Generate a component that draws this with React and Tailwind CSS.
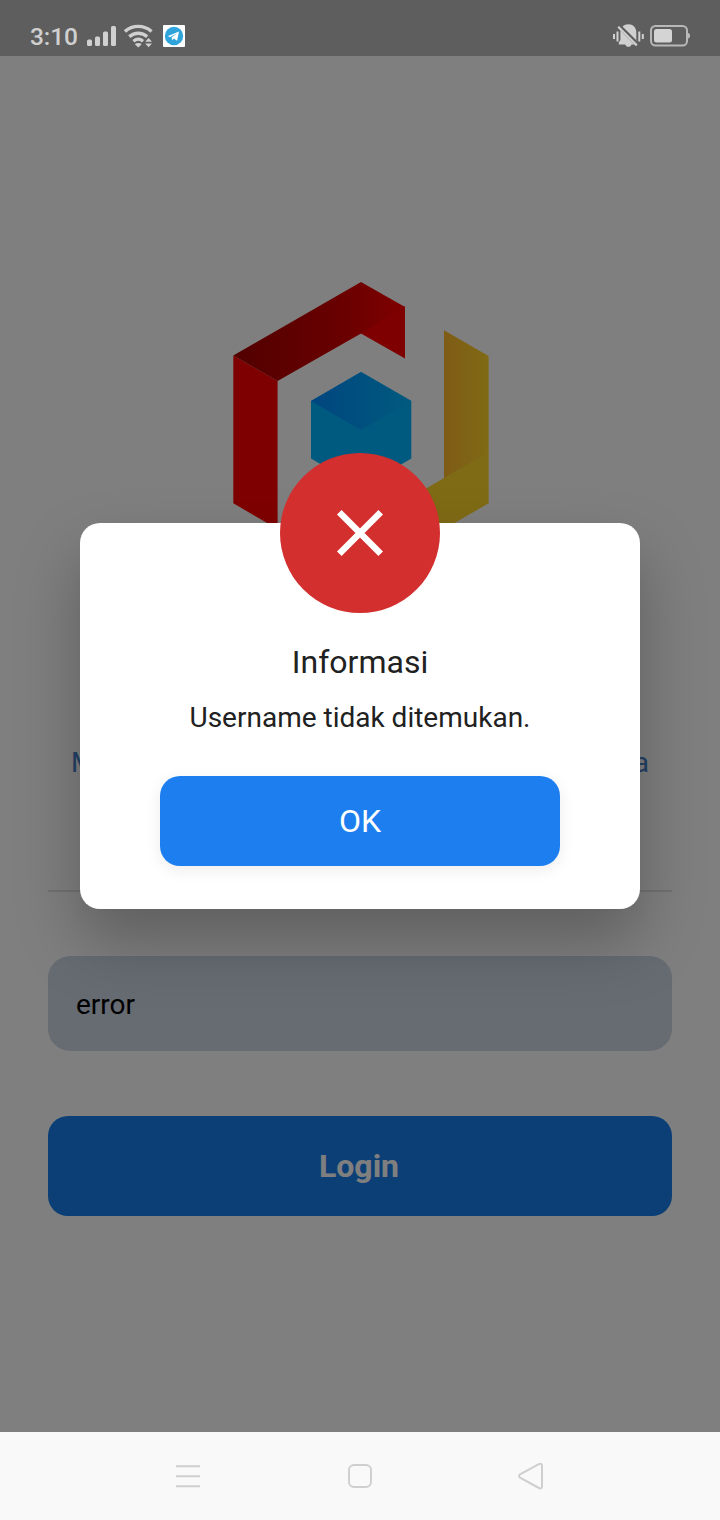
function Logo() {
  return (
    <svg viewBox="233 282 256 296" className="h-[296px] w-[256px] blur-[0.5px]" aria-hidden="true">
      <defs>
        <linearGradient id="redFold" x1="0" x2="1">
          <stop offset="0" stopColor="#a40000" />
          <stop offset="0.6" stopColor="#d00000" />
          <stop offset="1" stopColor="#ff0000" />
        </linearGradient>
        <linearGradient id="blueTop" x1="0" x2="1">
          <stop offset="0" stopColor="#008cff" />
          <stop offset="1" stopColor="#00b4ff" />
        </linearGradient>
        <linearGradient id="amber" x1="0" x2="1">
          <stop offset="0" stopColor="#ffb72d" />
          <stop offset="1" stopColor="#ffd52a" />
        </linearGradient>
      </defs>
      <path d="M233.3 355.5 277.6 381V529L233.3 503.3Z" fill="#ff0000" />
      <path d="M360 333.5 404 306 405 307V358.5L361 333.5Z" fill="#ff0000" />
      <path d="M233.3 355.5 361 282 405 307 361 333.5 277.6 381Z" fill="url(#redFold)" />
      <path d="M361 372 411.3 401V458.5L361 488 311 458.5V401Z" fill="#00b4ff" />
      <path d="M361 372 411.3 401 361 430 311 401Z" fill="url(#blueTop)" />
      <path d="M444 330.3 488.6 356V453L444 478.5Z" fill="url(#amber)" />
      <path d="M488.6 452.5V503.3L361 577V526.5L444 478Z" fill="#ffd52a" />
    </svg>
  );
}

function StatusBar() {
  return (
    <header className="absolute inset-x-0 top-0 flex h-14 items-start justify-between bg-black/[0.26] pr-[30px] pl-[30px] text-[#d0d0d0]">
      <div className="flex items-start">
        <span className="mt-[21px] w-[57px] text-[24.5px] leading-8 font-medium tracking-[-0.1px]">3:10</span>
        <svg viewBox="0 0 29 20" className="mt-[26px] h-5 w-[29px]" fill="currentColor">
          <rect x="0" y="13.5" width="5" height="6.5" rx="1.5" />
          <rect x="8" y="10.5" width="5" height="9.5" rx="1.5" />
          <rect x="16" y="5.5" width="5" height="14.5" rx="1.5" />
          <rect x="24" y="0" width="5" height="20" rx="1.5" />
        </svg>
        <svg viewBox="0 0 30 24" className="mt-6 ml-2 h-6 w-[30px]" fill="none" stroke="currentColor">
          <path d="M1 7.5C8.5.7 20 .7 27.5 7.5" strokeWidth="3.4" />
          <path d="M5.3 12.6C10.5 8.1 18 8.1 23.2 12.6" strokeWidth="3.4" />
          <path d="M9.4 17.2C12.5 14.6 16 14.6 19.1 17.2" strokeWidth="3.2" />
          <path d="M10.8 20.2c2-1.7 4.9-1.7 6.9 0L14.3 23.4Z" fill="currentColor" stroke="none" />
          <path d="M21.2 17.8 24.6 14 28 17.8ZM21.2 19.4H28L24.6 23.2Z" fill="currentColor" stroke="none" />
        </svg>
        <svg viewBox="0 0 22 22" className="mt-[25px] ml-[9px] size-[22px]">
          <rect width="22" height="22" rx="1" fill="#fff" />
          <circle cx="11" cy="11" r="9.2" fill="#2fa4db" />
          <path d="M4.6 11.3 16 6.6 14.1 15.8 10.7 13.6 9 15.2 8.6 12.5 13.7 8.5 7.4 12.1Z" fill="#fff" />
        </svg>
      </div>
      <div className="flex items-start">
        <svg viewBox="0 0 31 24" className="mt-6 -mr-px h-6 w-[31px]" fill="currentColor">
          <path d="M15.4.3c-4.7 0-8 3.4-8 8V16L5.8 18.5V20.5H12.2a3.3 3.3 0 0 0 6.4 0H25V18.5L23.3 16V8.3c0-4.6-3.3-8-7.9-8Z" />
          <path d="M6.2 2.3 24.8 20.9" stroke="#5e5e5e" strokeWidth="4.4" />
          <path d="M5.2 2.8 23.8 21.4" stroke="#d0d0d0" strokeWidth="2.2" />
          <path d="M0 10h2v5H0ZM3.5 7.5h2v10h-2ZM25.3 7.5h2v10h-2ZM28.8 10h2v5h-2Z" />
        </svg>
        <svg viewBox="0 0 41 22" className="mt-[25px] ml-[7px] -mr-px h-[22px] w-[41px]">
          <rect x="1" y="1" width="36" height="19.5" rx="4.5" fill="none" stroke="#b8b8b8" strokeWidth="2" />
          <rect x="4" y="4" width="18" height="13.5" rx="2.5" fill="#d4d4d4" />
          <path d="M38 8c2.8 0 2.8 5.4 0 5.4Z" fill="#b8b8b8" />
        </svg>
      </div>
    </header>
  );
}

function LoginPage() {
  return (
    <main className="flex h-[1432px] flex-col bg-white px-12 pt-[282px]">
      <div className="flex h-[296px] justify-center pl-0.5">
        <Logo />
      </div>
      <div className="mt-[169px] flex h-8 justify-between px-[23px] text-[28px] leading-8 text-[#4480cc]">
        <span>M</span>
        <span>a</span>
      </div>
      <div className="mt-[111px] h-0.5 bg-[#e2e2e2]" />
      <div className="mt-16 flex h-[95px] items-center rounded-[22px] bg-[#cfd8e6] px-7 text-[28px] text-black">
        <span className="mt-0.5">error</span>
      </div>
      <button className="mt-[65px] h-[100px] rounded-[20px] bg-[#1b7eee] pr-0.5 text-[32px] font-bold text-white">
        Login
      </button>
    </main>
  );
}

function InfoDialog() {
  return (
    <div className="absolute inset-x-0 top-0 flex h-[1432px] justify-center overflow-hidden bg-black/50 pt-[523px]">
      <section
        role="dialog"
        className="flex h-[386px] w-[560px] flex-col items-center rounded-[20px] bg-white text-[#212121] shadow-[0_32px_64px_rgba(0,0,0,0.26)]"
      >
        <div className="-mt-[70px] flex size-40 shrink-0 items-center justify-center rounded-full bg-[#d32f2f]">
          <svg viewBox="0 0 46 46" className="size-[46px]" stroke="#fff" strokeWidth="6.5">
            <path d="M2.3 2.3 43.7 43.7M43.7 2.3 2.3 43.7" />
          </svg>
        </div>
        <h1 className="mt-[30px] text-[32px] leading-[38px]">Informasi</h1>
        <p className="mt-[21px] text-[28px] leading-8">Username tidak ditemukan.</p>
        <button className="mt-[42px] h-[90px] w-[400px] rounded-[20px] bg-[#1d7fef] text-[32px] text-white shadow-[0_4px_16px_rgba(0,0,0,0.08)]">
          OK
        </button>
      </section>
    </div>
  );
}

function NavigationBar() {
  return (
    <nav className="flex h-[88px] items-center justify-between bg-[#f9f9f9] pr-[176px] pl-[175px]">
      <svg viewBox="0 0 26 26" className="size-[26px]" stroke="#cfcfcf" strokeWidth="2">
        <path d="M1 3.3H25M1 13.3H25M1 23.3H25" />
      </svg>
      <svg viewBox="0 0 26 26" className="size-[26px]" fill="none" stroke="#cfcfcf" strokeWidth="2">
        <rect x="2" y="2" width="22" height="22" rx="5" />
      </svg>
      <svg viewBox="0 0 26 28" className="h-7 w-[26px]" fill="none" stroke="#cfcfcf" strokeWidth="2" strokeLinejoin="round">
        <path d="M2 12.3 20.9 2.1Q24 .8 24 4V24.3Q24 27.3 21 26L2 15.6Q.2 14 2 12.3Z" />
      </svg>
    </nav>
  );
}

export default function App() {
  return (
    <div className="relative h-[1520px] w-[720px] overflow-hidden font-['Roboto',sans-serif]">
      <LoginPage />
      <InfoDialog />
      <StatusBar />
      <NavigationBar />
    </div>
  );
}
